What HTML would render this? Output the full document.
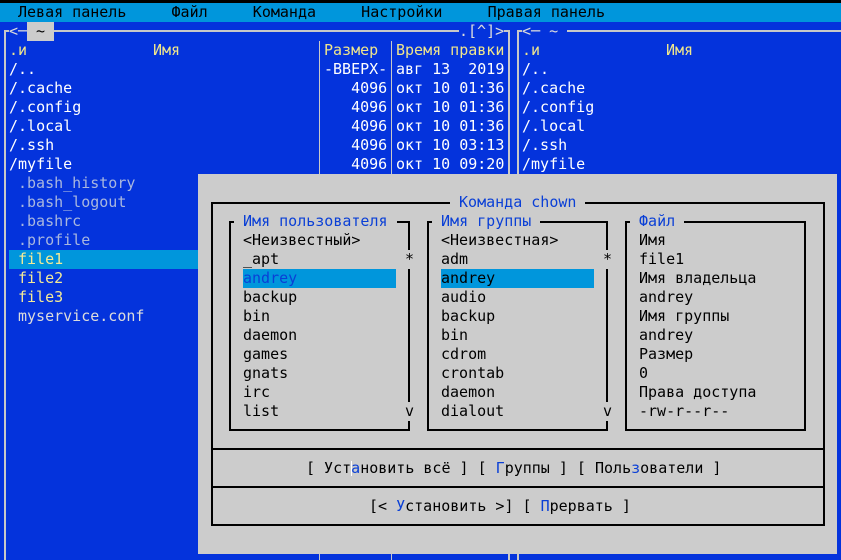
<!DOCTYPE html>
<html><head><meta charset="utf-8"><style>
body{margin:0;width:841px;height:560px;overflow:hidden;background:#0433dc;position:relative;font-family:"DejaVu Sans Mono","Liberation Mono",monospace;font-size:15px}
.t{position:absolute;white-space:pre;height:19px;line-height:19px}
.b{position:absolute}
.pl{background:#c8c8c8}
.dl{background:#000}
.w{color:#ffffff}
.f{color:#dcdcdc}
.d{color:#a9b7de}
.y{color:#f4ea96}
.h{color:#f0e68c}
.k{color:#000}
.u{color:#0a3fd6}
</style></head><body>
<div class="b" style="left:0;top:0;width:841px;height:3px;background:#000"></div>
<div class="b" style="left:0;top:3px;width:841px;height:19px;background:#0096dc"></div>
<div class="t k" style="left:18px;top:3px">Левая панель     Файл     Команда     Настройки     Правая панель</div>

<!-- panel lines -->
<div class="b pl" style="left:4px;top:30px;width:2px;height:530px"></div>
<div class="b pl" style="left:4px;top:30px;width:506px;height:2px"></div>
<div class="b pl" style="left:508px;top:30px;width:2px;height:530px"></div>
<div class="b pl" style="left:319px;top:41px;width:1px;height:519px"></div>
<div class="b pl" style="left:391px;top:41px;width:1px;height:519px"></div>
<div class="b pl" style="left:517px;top:30px;width:2px;height:530px"></div>
<div class="b pl" style="left:517px;top:30px;width:324px;height:2px"></div>

<div class="t f" style="left:9px;top:22px;background:#0433dc">&lt;─</div>
<div class="t k" style="left:27px;top:22px;background:#cccccc"> ~ </div>
<div class="t f" style="left:459px;top:22px;background:#0433dc">.[^]&gt;</div>
<div class="t f" style="left:522px;top:22px;background:#0433dc">&lt;─ ~ </div>

<div class="t h" style="left:9px;top:41px">.и</div>
<div class="t h" style="left:153px;top:41px">Имя</div>
<div class="t h" style="left:324px;top:41px">Размер</div>
<div class="t h" style="left:396px;top:41px">Время правки</div>
<div class="t h" style="left:522px;top:41px">.и</div>
<div class="t h" style="left:666px;top:41px">Имя</div>

<div class="t w" style="left:9px;top:60px">/..
/.cache
/.config
/.local
/.ssh
/myfile</div>
<div class="t w" style="left:522px;top:60px">/..
/.cache
/.config
/.local
/.ssh
/myfile</div>
<div class="t w" style="left:324px;top:60px">-ВВЕРХ-
   4096
   4096
   4096
   4096
   4096</div>
<div class="t w" style="left:396px;top:60px">авг 13  2019
окт 10 01:36
окт 10 01:36
окт 10 01:36
окт 10 03:13
окт 10 09:20</div>
<div class="t d" style="left:18px;top:174px">.bash_history
.bash_logout
.bashrc
.profile</div>
<div class="b" style="left:9px;top:250px;width:300px;height:19px;background:#0096dc"></div>
<div class="t y" style="left:18px;top:250px">file1
file2
file3</div>
<div class="t f" style="left:18px;top:307px">myservice.conf</div>

<!-- dialog -->
<div class="b" style="left:198px;top:174px;width:639px;height:380px;background:#cccccc"></div>
<div class="b dl" style="left:211px;top:202px;width:614px;height:2px"></div>
<div class="b dl" style="left:211px;top:202px;width:2px;height:324px"></div>
<div class="b dl" style="left:823px;top:202px;width:2px;height:324px"></div>
<div class="b dl" style="left:211px;top:524px;width:614px;height:2px"></div>
<div class="b dl" style="left:211px;top:448px;width:614px;height:2px"></div>
<div class="b dl" style="left:211px;top:486px;width:614px;height:2px"></div>

<div class="b dl" style="left:229px;top:221px;width:181px;height:2px"></div>
<div class="b dl" style="left:229px;top:221px;width:2px;height:210px"></div>
<div class="b dl" style="left:408px;top:221px;width:2px;height:210px"></div>
<div class="b dl" style="left:229px;top:429px;width:181px;height:2px"></div>
<div class="b dl" style="left:427px;top:221px;width:181px;height:2px"></div>
<div class="b dl" style="left:427px;top:221px;width:2px;height:210px"></div>
<div class="b dl" style="left:606px;top:221px;width:2px;height:210px"></div>
<div class="b dl" style="left:427px;top:429px;width:181px;height:2px"></div>
<div class="b dl" style="left:625px;top:221px;width:181px;height:2px"></div>
<div class="b dl" style="left:625px;top:221px;width:2px;height:210px"></div>
<div class="b dl" style="left:804px;top:221px;width:2px;height:210px"></div>
<div class="b dl" style="left:625px;top:429px;width:181px;height:2px"></div>

<div class="t u" style="left:450px;top:193px;background:#cccccc"> Команда chown </div>
<div class="t u" style="left:234px;top:212px;background:#cccccc"> Имя пользователя </div>
<div class="t u" style="left:432px;top:212px;background:#cccccc"> Имя группы </div>
<div class="t u" style="left:630px;top:212px;background:#cccccc"> Файл </div>

<div class="b" style="left:243px;top:269px;width:153px;height:19px;background:#0096dc"></div>
<div class="b" style="left:441px;top:269px;width:153px;height:19px;background:#0096dc"></div>
<div class="t k" style="left:243px;top:231px">&lt;Неизвестный&gt;
_apt
<span class="u">andrey</span>
backup
bin
daemon
games
gnats
irc
list</div>
<div class="t k" style="left:441px;top:231px">&lt;Неизвестная&gt;
adm
andrey
audio
backup
bin
cdrom
crontab
daemon
dialout</div>
<div class="t k" style="left:639px;top:231px">Имя
file1
Имя владельца
andrey
Имя группы
andrey
Размер
0
Права доступа
-rw-r--r--</div>
<div class="t k" style="left:405px;top:250px;background:#cccccc">*</div>
<div class="t k" style="left:603px;top:250px;background:#cccccc">*</div>
<div class="t k" style="left:405px;top:402px;background:#cccccc">v</div>
<div class="t k" style="left:603px;top:402px;background:#cccccc">v</div>

<div class="t k" style="left:306px;top:459px">[ Уст<span class="u">а</span>новить всё ] [ <span class="u">Г</span>руппы ] [ Поль<span class="u">з</span>ователи ]</div>
<div class="b" style="left:351px;top:461px;width:1px;height:15px;background:#fff"></div>
<div class="t k" style="left:369px;top:497px">[&lt; <span class="u">У</span>становить &gt;] [ <span class="u">П</span>рервать ]</div>
</body></html>
